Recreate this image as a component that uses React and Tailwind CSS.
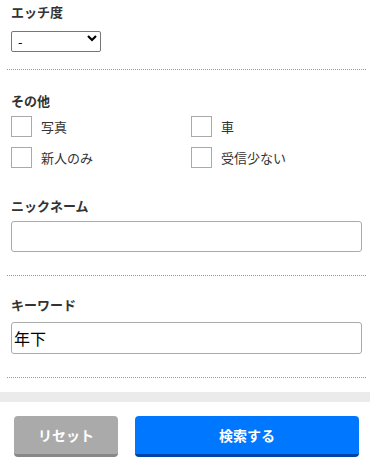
import React from "react";

function Checkbox({ label }) {
  return (
    <label className="flex items-center">
      <span className="w-[21px] h-[21px] border border-[#aaaaaa] bg-white shrink-0"></span>
      <span className="ml-[9px] text-[13px] text-[#333]">{label}</span>
    </label>
  );
}

function Divider() {
  return <div className="ml-[7px] mr-[4px] border-t border-dotted border-[#999999]"></div>;
}

export default function App() {
  return (
    <div
      className="w-[370px] h-[466px] bg-white overflow-hidden text-[#333]"
      style={{ fontFamily: '"Noto Sans CJK JP", "Noto Sans", sans-serif' }}
    >
      <div className="pl-[11px] pr-[8px] pt-[2px]">
        <div className="text-[13px] font-bold leading-[19px]">エッチ度</div>
        <div className="relative mt-[7px] w-[90px] h-[21px]">
          <select className="appearance-none w-full h-full border border-[#767676] rounded-[2px] bg-white text-[13px] text-black pl-[6px] leading-[19px] outline-none">
            <option>-</option>
          </select>
          <svg
            className="absolute right-[4px] top-[6px] pointer-events-none"
            width="10"
            height="8"
            viewBox="0 0 10 8"
          >
            <path d="M1 2 L5 6 L9 2" fill="none" stroke="#000" strokeWidth="2.2" />
          </svg>
        </div>
      </div>
      <div className="mt-[20px]">
        <Divider />
      </div>
      <div className="pl-[11px] pr-[8px] mt-[21px]">
        <div className="text-[13px] font-bold leading-[19px]">その他</div>
        <div className="grid grid-cols-[180px_1fr] gap-y-[10px] mt-[6px]">
          <Checkbox label="写真" />
          <Checkbox label="車" />
          <Checkbox label="新人のみ" />
          <Checkbox label="受信少ない" />
        </div>
        <div className="text-[13px] font-bold leading-[19px] mt-[28px]">ニックネーム</div>
        <input
          type="text"
          className="block mt-[6px] w-full h-[31px] border border-[#aaaaaa] rounded-[3px] bg-white text-[16px] px-[2px] outline-none"
        />
      </div>
      <div className="mt-[23px]">
        <Divider />
      </div>
      <div className="pl-[11px] pr-[8px] mt-[19px]">
        <div className="text-[13px] font-bold leading-[19px]">キーワード</div>
        <input
          type="text"
          defaultValue="年下"
          className="block mt-[8px] w-full h-[32px] border border-[#aaaaaa] rounded-[3px] bg-white text-[16px] text-black px-[2px] outline-none"
        />
      </div>
      <div className="mt-[23px]">
        <Divider />
      </div>
      <div className="mt-[14px] h-[10px] bg-[#ebebeb]"></div>
      <div className="flex mt-[14px] pl-[14px] pr-[11px] gap-[17px]">
        <button className="w-[104px] h-[41px] rounded-[4px] bg-[#aaaaaa] border-b-[3px] border-[#888888] text-white text-[14px] font-bold">
          リセット
        </button>
        <button className="flex-1 h-[41px] rounded-[4px] bg-[#0077ff] border-b-[3px] border-[#0044aa] text-white text-[14px] font-bold">
          検索する
        </button>
      </div>
    </div>
  );
}
